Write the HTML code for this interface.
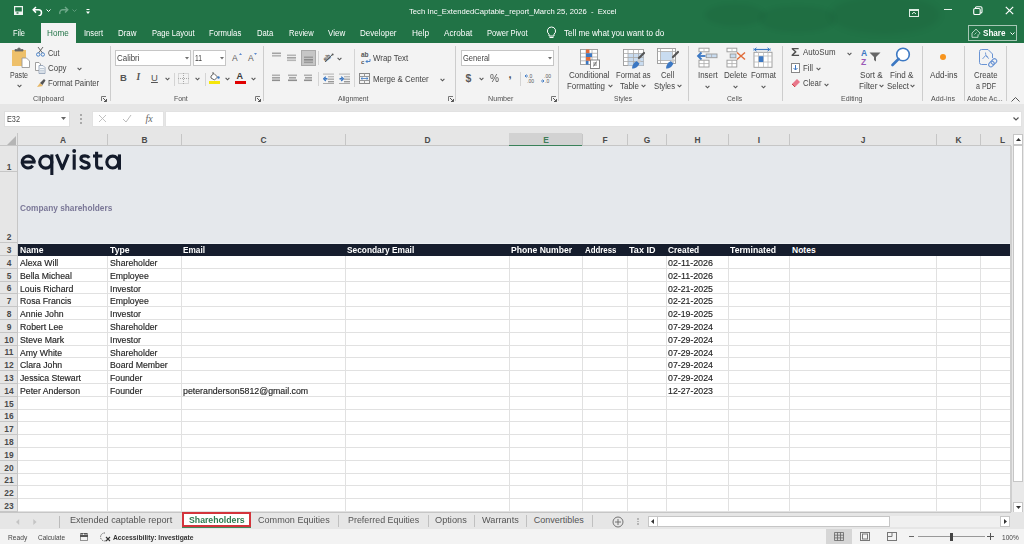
<!DOCTYPE html><html><head><meta charset="utf-8"><style>
html,body{margin:0;padding:0;width:1024px;height:544px;overflow:hidden;background:#fff;}
body{position:relative;font-family:"Liberation Sans",sans-serif;}
div{position:absolute;}
.t{white-space:pre;transform-origin:0 50%;}
</style></head><body>
<div style="left:0px;top:0px;width:1024px;height:43px;background:#217346;"></div>
<div style="left:700px;top:0;width:260px;height:43px;overflow:hidden;"><div style="left:5px;top:4px;width:60px;height:22px;border-radius:50%;background:rgba(0,0,0,0.045);filter:blur(2px);"></div><div style="left:60px;top:6px;width:75px;height:26px;border-radius:45%;background:rgba(0,0,0,0.045);filter:blur(2px);"></div><div style="left:130px;top:-4px;width:110px;height:38px;border-radius:50%;background:rgba(0,0,0,0.05);filter:blur(3px);"></div></div>
<svg style="position:absolute;left:14px;top:6px;" width="9" height="9" viewBox="0 0 9 9"><path d="M0.6 0.6 H8.4 V8.4 H0.6Z" fill="none" stroke="#f0f6f2" stroke-width="1.2"/><rect x="0.6" y="5.5" width="7.8" height="2.9" fill="#f0f6f2"/><rect x="2.5" y="6.3" width="2" height="1.4" fill="#2a6a45"/></svg>
<svg style="position:absolute;left:32px;top:6px;" width="11" height="10" viewBox="0 0 11 10"><path d="M4 1 L1.2 3.8 L4 6.6 M1.2 3.8 H6.5 A3 3 0 0 1 6.5 9.8" fill="none" stroke="#fff" stroke-width="1.5"/></svg>
<svg style="position:absolute;left:46px;top:9px;" width="5" height="4" viewBox="0 0 5 4"><path d="M0.5 0.5 L2.5 2.5 L4.5 0.5" fill="none" stroke="#fff" stroke-width="1"/></svg>
<svg style="position:absolute;left:58px;top:6px;" width="11" height="10" viewBox="0 0 11 10"><path d="M7 1 L9.8 3.8 L7 6.6 M9.8 3.8 H4.5 A3 3 0 0 0 2 8" fill="none" stroke="#6fa98a" stroke-width="1.4"/></svg>
<svg style="position:absolute;left:72px;top:9px;" width="5" height="4" viewBox="0 0 5 4"><path d="M0.5 0.5 L2.5 2.5 L4.5 0.5" fill="none" stroke="#5e9c7c" stroke-width="1"/></svg>
<svg style="position:absolute;left:86px;top:9px;" width="4" height="6" viewBox="0 0 4 6"><rect x="0.5" y="0" width="3" height="1" fill="#fff"/><path d="M0 2.5 L2 5 L4 2.5Z" fill="#fff"/></svg>
<div class="t" style="left:408.50px;top:8.00px;font-size:8px;line-height:8px;color:#fff;transform:scaleX(0.9581);">Tech Inc_ExtendedCaptable_report_March 25, 2026  -  Excel</div>
<svg style="position:absolute;left:909px;top:9px;" width="10" height="8" viewBox="0 0 10 8"><rect x="0.5" y="0.5" width="9" height="7" fill="none" stroke="#dfeee5" stroke-width="1"/><rect x="0.5" y="0.5" width="9" height="1.5" fill="#dfeee5"/><path d="M3 5 L5 3.2 L7 5" stroke="#dfeee5" fill="none"/></svg>
<div style="left:944px;top:9px;width:8px;height:1px;background:#e8f2ec;"></div>
<svg style="position:absolute;left:973px;top:6px;" width="10" height="9" viewBox="0 0 10 9"><rect x="0.7" y="2.5" width="6.5" height="6" rx="1.3" fill="none" stroke="#fff" stroke-width="1.1"/><path d="M2.5 2.5 V2 A1.3 1.3 0 0 1 3.8 0.7 H7.7 A1.3 1.3 0 0 1 9 2 V5.7 A1.3 1.3 0 0 1 7.7 7 H7.2" fill="none" stroke="#fff" stroke-width="1.1"/></svg>
<svg style="position:absolute;left:1005px;top:6px;" width="9" height="9" viewBox="0 0 9 9"><path d="M0.8 0.8 L8.2 8.2 M8.2 0.8 L0.8 8.2" stroke="#fff" stroke-width="1.2"/></svg>
<div style="left:41px;top:23px;width:35px;height:20px;background:#f3f3f3;"></div>
<div class="t" style="left:13.25px;top:29.00px;font-size:8.5px;line-height:8.5px;color:#fff;transform:scaleX(0.8761);">File</div>
<div class="t" style="left:47.00px;top:29.00px;font-size:8.5px;line-height:8.5px;color:#217346;transform:scaleX(0.9592);">Home</div>
<div class="t" style="left:83.75px;top:29.00px;font-size:8.5px;line-height:8.5px;color:#fff;transform:scaleX(0.8938);">Insert</div>
<div class="t" style="left:118.00px;top:29.00px;font-size:8.5px;line-height:8.5px;color:#fff;transform:scaleX(0.9327);">Draw</div>
<div class="t" style="left:151.50px;top:29.00px;font-size:8.5px;line-height:8.5px;color:#fff;transform:scaleX(0.8903);">Page Layout</div>
<div class="t" style="left:209.00px;top:29.00px;font-size:8.5px;line-height:8.5px;color:#fff;transform:scaleX(0.9104);">Formulas</div>
<div class="t" style="left:256.75px;top:29.00px;font-size:8.5px;line-height:8.5px;color:#fff;transform:scaleX(0.9050);">Data</div>
<div class="t" style="left:288.50px;top:29.00px;font-size:8.5px;line-height:8.5px;color:#fff;transform:scaleX(0.8880);">Review</div>
<div class="t" style="left:328.00px;top:29.00px;font-size:8.5px;line-height:8.5px;color:#fff;transform:scaleX(0.9441);">View</div>
<div class="t" style="left:360.25px;top:29.00px;font-size:8.5px;line-height:8.5px;color:#fff;transform:scaleX(0.9420);">Developer</div>
<div class="t" style="left:411.75px;top:29.00px;font-size:8.5px;line-height:8.5px;color:#fff;transform:scaleX(0.9724);">Help</div>
<div class="t" style="left:444.00px;top:29.00px;font-size:8.5px;line-height:8.5px;color:#fff;transform:scaleX(0.9643);">Acrobat</div>
<div class="t" style="left:487.25px;top:29.00px;font-size:8.5px;line-height:8.5px;color:#fff;transform:scaleX(0.8930);">Power Pivot</div>
<svg style="position:absolute;left:546px;top:26px;" width="11" height="13" viewBox="0 0 11 13"><path d="M5.5 1 A4 4 0 0 1 8 8.2 V10 H3 V8.2 A4 4 0 0 1 5.5 1Z" fill="none" stroke="#fff" stroke-width="1"/><path d="M3.5 11.5 H7.5" stroke="#fff"/></svg>
<div class="t" style="left:563.75px;top:29.00px;font-size:8.5px;line-height:8.5px;color:#fff;transform:scaleX(0.9558);">Tell me what you want to do</div>
<div style="left:968px;top:25px;width:49px;height:16px;border:1px solid rgba(255,255,255,0.6);box-sizing:border-box;"></div>
<svg style="position:absolute;left:971px;top:28px;" width="10" height="10" viewBox="0 0 10 10"><path d="M1 9.3 H7 V6.5 M1 9.3 V5 L5 1.2 L9.2 5.2 L7.5 6.8" fill="none" stroke="#cfe3d6" stroke-width="0.9" stroke-linejoin="round"/><path d="M3.5 6.5 L5.5 4.5" stroke="#cfe3d6" stroke-width="0.8"/></svg>
<div class="t" style="left:982.50px;top:28.00px;font-size:9.5px;line-height:9.5px;color:#fff;font-weight:bold;transform:scaleX(0.8521);">Share</div>
<svg style="position:absolute;left:1009.5px;top:32px;" width="5" height="4" viewBox="0 0 5 4"><path d="M0.5 0.5 L2.5 2.5 L4.5 0.5" fill="none" stroke="#fff" stroke-width="1"/></svg>
<div style="left:0px;top:43px;width:1024px;height:61px;background:#f3f3f3;"></div>
<div style="left:110px;top:46px;width:1px;height:55px;background:#cdcdcd;"></div>
<div style="left:263px;top:46px;width:1px;height:55px;background:#cdcdcd;"></div>
<div style="left:455px;top:46px;width:1px;height:55px;background:#cdcdcd;"></div>
<div style="left:558px;top:46px;width:1px;height:55px;background:#cdcdcd;"></div>
<div style="left:688px;top:46px;width:1px;height:55px;background:#cdcdcd;"></div>
<div style="left:782px;top:46px;width:1px;height:55px;background:#cdcdcd;"></div>
<div style="left:922px;top:46px;width:1px;height:55px;background:#cdcdcd;"></div>
<div style="left:964px;top:46px;width:1px;height:55px;background:#cdcdcd;"></div>
<div style="left:1006px;top:46px;width:1px;height:55px;background:#cdcdcd;"></div>
<div class="t" style="left:33.00px;top:95.00px;font-size:8px;line-height:8px;color:#505050;transform:scaleX(0.9053);">Clipboard</div>
<div class="t" style="left:173.75px;top:95.00px;font-size:8px;line-height:8px;color:#505050;transform:scaleX(0.8589);">Font</div>
<div class="t" style="left:338.00px;top:95.00px;font-size:8px;line-height:8px;color:#505050;transform:scaleX(0.8573);">Alignment</div>
<div class="t" style="left:488.20px;top:95.00px;font-size:8px;line-height:8px;color:#505050;transform:scaleX(0.8927);">Number</div>
<div class="t" style="left:614.00px;top:95.00px;font-size:8px;line-height:8px;color:#505050;transform:scaleX(0.8262);">Styles</div>
<div class="t" style="left:727.00px;top:95.00px;font-size:8px;line-height:8px;color:#505050;transform:scaleX(0.8436);">Cells</div>
<div class="t" style="left:841.00px;top:95.00px;font-size:8px;line-height:8px;color:#505050;transform:scaleX(0.8789);">Editing</div>
<div class="t" style="left:930.50px;top:95.00px;font-size:8px;line-height:8px;color:#505050;transform:scaleX(0.8848);">Add-ins</div>
<div class="t" style="left:966.75px;top:95.00px;font-size:8px;line-height:8px;color:#505050;transform:scaleX(0.8737);">Adobe Ac...</div>
<svg style="position:absolute;left:101px;top:96px;" width="6" height="6" viewBox="0 0 6 6"><path d="M0.5 5 V0.5 H5" fill="none" stroke="#777" stroke-width="1"/><path d="M2 2 L5.5 5.5 M5.5 3 V5.5 H3" fill="none" stroke="#555" stroke-width="1"/></svg>
<svg style="position:absolute;left:255px;top:96px;" width="6" height="6" viewBox="0 0 6 6"><path d="M0.5 5 V0.5 H5" fill="none" stroke="#777" stroke-width="1"/><path d="M2 2 L5.5 5.5 M5.5 3 V5.5 H3" fill="none" stroke="#555" stroke-width="1"/></svg>
<svg style="position:absolute;left:448px;top:96px;" width="6" height="6" viewBox="0 0 6 6"><path d="M0.5 5 V0.5 H5" fill="none" stroke="#777" stroke-width="1"/><path d="M2 2 L5.5 5.5 M5.5 3 V5.5 H3" fill="none" stroke="#555" stroke-width="1"/></svg>
<svg style="position:absolute;left:551px;top:96px;" width="6" height="6" viewBox="0 0 6 6"><path d="M0.5 5 V0.5 H5" fill="none" stroke="#777" stroke-width="1"/><path d="M2 2 L5.5 5.5 M5.5 3 V5.5 H3" fill="none" stroke="#555" stroke-width="1"/></svg>
<svg style="position:absolute;left:1011px;top:97px;" width="9" height="5" viewBox="0 0 9 5"><path d="M0.5 4.5 L4.5 0.5 L8.5 4.5" fill="none" stroke="#555" stroke-width="1"/></svg>
<svg style="position:absolute;left:11px;top:47px;" width="19" height="22" viewBox="0 0 19 22"><rect x="1" y="3" width="14" height="16" fill="#eec06a"/><path d="M4 4 H12 V2.5 H9.5 A1.5 1.5 0 0 0 6.5 2.5 H4Z" fill="#666" stroke="#666" stroke-width="0.8"/><path d="M11 11 H15.5 L18.5 14 V20.5 H11Z" fill="#fff" stroke="#999" stroke-width="0.9"/></svg>
<div class="t" style="left:10.00px;top:71.00px;font-size:8.5px;line-height:8.5px;color:#444444;transform:scaleX(0.8281);">Paste</div>
<svg style="position:absolute;left:16.5px;top:84px;" width="5" height="4" viewBox="0 0 5 4"><path d="M0.6 0.8 L2.5 2.8 L4.4 0.8" fill="none" stroke="#555" stroke-width="1.1"/></svg>
<svg style="position:absolute;left:36px;top:47px;" width="9" height="10" viewBox="0 0 9 10"><path d="M2 0 L6.5 6 M7 0 L2.5 6" stroke="#555" stroke-width="0.9"/><circle cx="2.2" cy="7.5" r="1.7" fill="none" stroke="#3c78c3" stroke-width="0.9"/><circle cx="6.8" cy="7.5" r="1.7" fill="none" stroke="#3c78c3" stroke-width="0.9"/></svg>
<div class="t" style="left:47.80px;top:49.00px;font-size:8.5px;line-height:8.5px;color:#444444;transform:scaleX(0.8694);">Cut</div>
<svg style="position:absolute;left:35px;top:62px;" width="11" height="12" viewBox="0 0 11 12"><path d="M0.5 0.5 H4 L5.5 2 V8.5 H0.5Z" fill="#fff" stroke="#888" stroke-width="0.8"/><path d="M4 3.5 H8 L10 5.5 V11.5 H4Z" fill="#f4f7fb" stroke="#8a9bb0" stroke-width="0.8"/><path d="M5 6.5 H9 M5 8.3 H9 M5 10 H9" stroke="#9ab" stroke-width="0.6"/></svg>
<div class="t" style="left:47.80px;top:64.00px;font-size:8.5px;line-height:8.5px;color:#444444;transform:scaleX(0.9323);">Copy</div>
<svg style="position:absolute;left:76.5px;top:67px;" width="5" height="4" viewBox="0 0 5 4"><path d="M0.6 0.8 L2.5 2.8 L4.4 0.8" fill="none" stroke="#555" stroke-width="1.1"/></svg>
<svg style="position:absolute;left:36px;top:78px;" width="10" height="10" viewBox="0 0 10 10"><path d="M1 9 L4 5 L7 8 Z" fill="#e8b865"/><path d="M4 5 L8 1 L9.5 2.5 L6.5 7" fill="#555"/></svg>
<div class="t" style="left:47.80px;top:79.00px;font-size:8.5px;line-height:8.5px;color:#444444;transform:scaleX(0.9108);">Format Painter</div>
<div style="left:115px;top:50px;width:76px;height:16px;background:#fff;border:1px solid #c6c6c6;box-sizing:border-box;"></div>
<div class="t" style="left:117.00px;top:54.00px;font-size:8.5px;line-height:8.5px;color:#444444;transform:scaleX(0.9340);">Calibri</div>
<svg style="position:absolute;left:185px;top:57px;" width="4" height="2.5" viewBox="0 0 4 2.5"><path d="M0 0 H4 L2 2.5Z" fill="#707070"/></svg>
<div style="left:193px;top:50px;width:33px;height:16px;background:#fff;border:1px solid #c6c6c6;box-sizing:border-box;"></div>
<div class="t" style="left:195.00px;top:54.00px;font-size:8.5px;line-height:8.5px;color:#444444;transform:scaleX(0.7933);">11</div>
<svg style="position:absolute;left:219.5px;top:57px;" width="4" height="2.5" viewBox="0 0 4 2.5"><path d="M0 0 H4 L2 2.5Z" fill="#707070"/></svg>
<div class="t" style="left:232.00px;top:54.00px;font-size:8.5px;line-height:8.5px;color:#5a5a5a;">A</div>
<svg style="position:absolute;left:238.5px;top:53px;" width="3" height="2" viewBox="0 0 3 2"><path d="M0 2 L1.5 0 L3 2Z" fill="#5b8ad0"/></svg>
<div class="t" style="left:248.00px;top:54.00px;font-size:8.5px;line-height:8.5px;color:#5a5a5a;">A</div>
<svg style="position:absolute;left:254px;top:53px;" width="3" height="2" viewBox="0 0 3 2"><path d="M0 0 L1.5 2 L3 0Z" fill="#5b8ad0"/></svg>
<div class="t" style="left:120.00px;top:73.00px;font-size:9.5px;line-height:9.5px;color:#555;font-weight:bold;">B</div>
<div class="t" style="left:136.50px;top:73.00px;font-size:9.5px;line-height:9.5px;color:#555;font-style:italic;font-family:'Liberation Serif',serif;font-weight:bold;">I</div>
<div class="t" style="left:151.00px;top:73.00px;font-size:9.5px;line-height:9.5px;color:#555;text-decoration:underline;">U</div>
<svg style="position:absolute;left:164.5px;top:77px;" width="5" height="4" viewBox="0 0 5 4"><path d="M0.6 0.8 L2.5 2.8 L4.4 0.8" fill="none" stroke="#555" stroke-width="1.1"/></svg>
<div style="left:174px;top:73px;width:1px;height:13px;background:#d4d4d4;"></div>
<svg style="position:absolute;left:178px;top:73px;" width="11" height="11" viewBox="0 0 11 11"><rect x="0.5" y="0.5" width="10" height="10" fill="none" stroke="#bbb" stroke-dasharray="1 1"/><path d="M5.5 0 V11 M0 5.5 H11" stroke="#aaa" stroke-dasharray="1 1"/></svg>
<svg style="position:absolute;left:194.5px;top:77px;" width="5" height="4" viewBox="0 0 5 4"><path d="M0.6 0.8 L2.5 2.8 L4.4 0.8" fill="none" stroke="#555" stroke-width="1.1"/></svg>
<div style="left:205px;top:73px;width:1px;height:13px;background:#d4d4d4;"></div>
<svg style="position:absolute;left:208px;top:71px;" width="13" height="13" viewBox="0 0 13 13"><path d="M5 1 V3 M3 5 L6 2.5 L9.5 6 L6.5 9 L3 7Z" fill="#fff" stroke="#555" stroke-width="0.9"/><circle cx="10.5" cy="6.5" r="1.2" fill="#3c78c3"/><rect x="1" y="10" width="11" height="3" fill="#f5e60a"/></svg>
<svg style="position:absolute;left:224.5px;top:77px;" width="5" height="4" viewBox="0 0 5 4"><path d="M0.6 0.8 L2.5 2.8 L4.4 0.8" fill="none" stroke="#555" stroke-width="1.1"/></svg>
<div class="t" style="left:236.50px;top:72.00px;font-size:9px;line-height:9px;color:#3a3a3a;font-weight:bold;">A</div>
<div style="left:235px;top:81px;width:11px;height:3px;background:#e00000;"></div>
<svg style="position:absolute;left:250.5px;top:77px;" width="5" height="4" viewBox="0 0 5 4"><path d="M0.6 0.8 L2.5 2.8 L4.4 0.8" fill="none" stroke="#555" stroke-width="1.1"/></svg>
<svg style="position:absolute;left:272px;top:52px;" width="12" height="12" viewBox="0 0 12 12"><rect x="0" y="0.5" width="9" height="1.6" fill="#a3a3a3"/><rect x="0" y="3" width="9" height="1.6" fill="#b5b5b5"/></svg>
<svg style="position:absolute;left:287px;top:54px;" width="12" height="12" viewBox="0 0 12 12"><rect x="0" y="0.5" width="9" height="1.6" fill="#b5b5b5"/><rect x="0" y="3" width="9" height="1.6" fill="#a3a3a3"/><rect x="0" y="5.5" width="9" height="1.6" fill="#b5b5b5"/></svg>
<div style="left:301px;top:50px;width:15px;height:16px;background:#c6c6c6;border:1px solid #a9a9a9;box-sizing:border-box;"></div>
<svg style="position:absolute;left:304px;top:56px;" width="12" height="12" viewBox="0 0 12 12"><rect x="0" y="0.5" width="9" height="1.6" fill="#9a9a9a"/><rect x="0" y="3" width="9" height="1.6" fill="#8a8a8a"/><rect x="0" y="5.5" width="9" height="1.6" fill="#9a9a9a"/></svg>
<div style="left:318px;top:51px;width:1px;height:14px;background:#d4d4d4;"></div>
<svg style="position:absolute;left:322px;top:51px;" width="13" height="12" viewBox="0 0 13 12"><g transform="rotate(-40 6 6)"><text x="1" y="8" font-size="6.5" font-family="Liberation Sans" font-weight="bold" fill="none" stroke="#666" stroke-width="0.5">ab</text></g><path d="M3 11 L11 3" stroke="#555" stroke-width="0.9"/><circle cx="10.6" cy="3.4" r="1" fill="#555"/></svg>
<svg style="position:absolute;left:336.5px;top:57px;" width="5" height="4" viewBox="0 0 5 4"><path d="M0.6 0.8 L2.5 2.8 L4.4 0.8" fill="none" stroke="#555" stroke-width="1.1"/></svg>
<svg style="position:absolute;left:272px;top:74px;" width="12" height="12" viewBox="0 0 12 12"><rect x="0" y="0.5" width="8" height="1.6" fill="#b0b0b0"/><rect x="0" y="3" width="8" height="1.6" fill="#a3a3a3"/><rect x="0" y="5.5" width="8" height="1.6" fill="#8f8f8f"/></svg>
<svg style="position:absolute;left:288px;top:74px;" width="12" height="12" viewBox="0 0 12 12"><rect x="0" y="0.5" width="9" height="1.6" fill="#b0b0b0"/><rect x="1" y="3" width="7" height="1.6" fill="#a3a3a3"/><rect x="0" y="5.5" width="9" height="1.6" fill="#8f8f8f"/></svg>
<svg style="position:absolute;left:304px;top:74px;" width="12" height="12" viewBox="0 0 12 12"><rect x="0" y="0.5" width="8" height="1.6" fill="#b0b0b0"/><rect x="1" y="3" width="7" height="1.6" fill="#a3a3a3"/><rect x="0" y="5.5" width="8" height="1.6" fill="#8f8f8f"/></svg>
<div style="left:318px;top:72px;width:1px;height:14px;background:#d4d4d4;"></div>
<svg style="position:absolute;left:323px;top:73px;" width="11" height="11" viewBox="0 0 11 11"><rect x="0" y="0.5" width="11" height="1.2" fill="#bbb"/><rect x="5" y="3" width="6" height="1.4" fill="#bbb"/><rect x="5" y="5.5" width="6" height="1.4" fill="#aaa"/><rect x="5" y="8" width="6" height="1.4" fill="#999"/><rect x="0" y="10" width="11" height="1" fill="#aaa"/><path d="M4.5 5.8 H1.5" stroke="#3c78c3" stroke-width="1.6"/><path d="M2.8 3.6 L0.6 5.8 L2.8 8" stroke="#3c78c3" stroke-width="1.3" fill="none"/></svg>
<svg style="position:absolute;left:339px;top:73px;" width="11" height="11" viewBox="0 0 11 11"><rect x="0" y="0.5" width="11" height="1.2" fill="#bbb"/><rect x="5" y="3" width="6" height="1.4" fill="#bbb"/><rect x="5" y="5.5" width="6" height="1.4" fill="#aaa"/><rect x="5" y="8" width="6" height="1.4" fill="#999"/><rect x="0" y="10" width="11" height="1" fill="#aaa"/><path d="M0.5 5.8 H3.5" stroke="#3c78c3" stroke-width="1.6"/><path d="M2.2 3.6 L4.4 5.8 L2.2 8" stroke="#3c78c3" stroke-width="1.3" fill="none"/></svg>
<div style="left:354px;top:49px;width:1px;height:38px;background:#d4d4d4;"></div>
<div class="t" style="left:361.00px;top:52.00px;font-size:6.5px;line-height:6.5px;color:#555;font-weight:bold;">ab</div>
<svg style="position:absolute;left:361px;top:58px;" width="10" height="6" viewBox="0 0 10 6"><text x="0" y="5.5" font-size="6" font-family="Liberation Sans" font-weight="bold" fill="#555">c</text><path d="M9 1 V3.5 H5 M6.5 2 L5 3.5 L6.5 5" stroke="#3c78c3" fill="none" stroke-width="0.9"/></svg>
<div class="t" style="left:372.75px;top:54.00px;font-size:8.5px;line-height:8.5px;color:#444444;transform:scaleX(0.9288);">Wrap Text</div>
<svg style="position:absolute;left:359px;top:73px;" width="11" height="11" viewBox="0 0 11 11"><rect x="0.5" y="0.5" width="10" height="10" fill="none" stroke="#888"/><path d="M0.5 3.5 H10.5 M0.5 7.5 H10.5 M5.5 0.5 V3.5 M5.5 7.5 V10.5" stroke="#999"/><path d="M2 5.5 H9 M3.5 4.3 L2 5.5 L3.5 6.7 M7.5 4.3 L9 5.5 L7.5 6.7" stroke="#3c78c3" fill="none" stroke-width="0.8"/></svg>
<div class="t" style="left:372.75px;top:75.00px;font-size:8.5px;line-height:8.5px;color:#444444;transform:scaleX(0.9292);">Merge &amp; Center</div>
<svg style="position:absolute;left:439.5px;top:78px;" width="5" height="4" viewBox="0 0 5 4"><path d="M0.6 0.8 L2.5 2.8 L4.4 0.8" fill="none" stroke="#555" stroke-width="1.1"/></svg>
<div style="left:461px;top:50px;width:93px;height:16px;background:#fff;border:1px solid #c6c6c6;box-sizing:border-box;"></div>
<div class="t" style="left:463.00px;top:54.00px;font-size:8.5px;line-height:8.5px;color:#444444;transform:scaleX(0.8846);">General</div>
<svg style="position:absolute;left:547.5px;top:57px;" width="4" height="2.5" viewBox="0 0 4 2.5"><path d="M0 0 H4 L2 2.5Z" fill="#707070"/></svg>
<div class="t" style="left:465.50px;top:73.00px;font-size:10.5px;line-height:10.5px;color:#5a5a5a;font-weight:bold;">$</div>
<svg style="position:absolute;left:478.5px;top:77px;" width="5" height="4" viewBox="0 0 5 4"><path d="M0.6 0.8 L2.5 2.8 L4.4 0.8" fill="none" stroke="#555" stroke-width="1.1"/></svg>
<div class="t" style="left:489.50px;top:74.00px;font-size:10px;line-height:10px;color:#555;transform:scaleX(1.0122);">%</div>
<div class="t" style="left:508.50px;top:69.00px;font-size:11px;line-height:11px;color:#505050;font-weight:bold;">,</div>
<div style="left:520px;top:72px;width:1px;height:14px;background:#d4d4d4;"></div>
<svg style="position:absolute;left:525px;top:73px;" width="10" height="11" viewBox="0 0 10 11"><text x="3" y="4.5" font-size="5" font-family="Liberation Sans" fill="#555">.0</text><text x="2" y="10" font-size="5" font-family="Liberation Sans" fill="#555">.00</text><path d="M0 3 H3 M1.5 1.5 L0 3 L1.5 4.5" stroke="#3c78c3" fill="none" stroke-width="0.9"/></svg>
<svg style="position:absolute;left:541px;top:73px;" width="11" height="11" viewBox="0 0 11 11"><text x="3" y="4.5" font-size="5" font-family="Liberation Sans" fill="#555">.00</text><text x="4" y="10" font-size="5" font-family="Liberation Sans" fill="#555">.0</text><path d="M0 8 H3 M1.5 6.5 L3 8 L1.5 9.5" stroke="#3c78c3" fill="none" stroke-width="0.9"/></svg>
<svg style="position:absolute;left:580px;top:49px;" width="21" height="20" viewBox="0 0 21 20"><rect x="0.5" y="0.5" width="17" height="15" fill="#fff" stroke="#999" stroke-width="0.9"/><path d="M0.5 4.3 H17.5 M0.5 8 H17.5 M0.5 11.8 H17.5 M6 0.5 V15.5 M12 0.5 V15.5" stroke="#aaa" stroke-width="0.8"/><rect x="6" y="0.5" width="3.5" height="3.8" fill="#e06c3a"/><rect x="6" y="4.3" width="6" height="3.7" fill="#3c78c3"/><rect x="6" y="8" width="4.5" height="3.8" fill="#e06c3a"/><rect x="6" y="11.8" width="2.5" height="3.7" fill="#3c78c3"/><rect x="10.5" y="11" width="9" height="8.5" fill="#fff" stroke="#777" stroke-width="0.9"/><path d="M13 16 H17 M13 14 H17 M16.5 12.5 L13.5 17.5" stroke="#555" stroke-width="0.7"/></svg>
<div class="t" style="left:569.00px;top:71.00px;font-size:8.5px;line-height:8.5px;color:#444444;transform:scaleX(0.9523);">Conditional</div>
<div class="t" style="left:566.50px;top:82.00px;font-size:8.5px;line-height:8.5px;color:#444444;transform:scaleX(0.9354);">Formatting</div>
<svg style="position:absolute;left:607.5px;top:84px;" width="5" height="4" viewBox="0 0 5 4"><path d="M0.6 0.8 L2.5 2.8 L4.4 0.8" fill="none" stroke="#555" stroke-width="1.1"/></svg>
<svg style="position:absolute;left:623px;top:49px;" width="22" height="20" viewBox="0 0 22 20"><rect x="0.5" y="0.5" width="20" height="16" fill="#fff" stroke="#999" stroke-width="0.9"/><rect x="5" y="4.5" width="15.5" height="12" fill="#c9dcf0"/><path d="M0.5 4.5 H20.5 M0.5 8.5 H20.5 M0.5 12.5 H20.5 M5 0.5 V16.5 M10.5 0.5 V16.5 M15.5 0.5 V16.5" stroke="#aaa" stroke-width="0.8"/><path d="M16 9 L21 4" stroke="#555" stroke-width="2.2" stroke-linecap="round"/><path d="M9 19.5 C9 16 11 13.5 14 12 L16.5 14.5 C15 17.5 13 19.5 9 19.5Z" fill="#3c78c3"/><path d="M14 12 L16 9.5 L18 11.5 L16.5 14.5Z" fill="#ccc"/></svg>
<div class="t" style="left:615.75px;top:71.00px;font-size:8.5px;line-height:8.5px;color:#444444;transform:scaleX(0.9017);">Format as</div>
<div class="t" style="left:620.00px;top:82.00px;font-size:8.5px;line-height:8.5px;color:#444444;transform:scaleX(0.9350);">Table</div>
<svg style="position:absolute;left:640.5px;top:84px;" width="5" height="4" viewBox="0 0 5 4"><path d="M0.6 0.8 L2.5 2.8 L4.4 0.8" fill="none" stroke="#555" stroke-width="1.1"/></svg>
<svg style="position:absolute;left:657px;top:48px;" width="22" height="21" viewBox="0 0 22 21"><rect x="0.5" y="0.5" width="18" height="15" fill="#fff" stroke="#999" stroke-width="0.9"/><path d="M0.5 3.5 H18.5 M0.5 12.5 H18.5 M3.5 0.5 V15.5 M15.5 0.5 V15.5" stroke="#aaa" stroke-width="0.8"/><rect x="4" y="4" width="11" height="8" fill="#c9dcf0"/><path d="M16 9 L21 4" stroke="#555" stroke-width="2.2" stroke-linecap="round"/><path d="M9 20.5 C9 17 11 14.5 14 13 L16.5 15.5 C15 18.5 13 20.5 9 20.5Z" fill="#3c78c3"/><path d="M14 13 L16 10 L18 12 L16.5 15.5Z" fill="#ccc"/></svg>
<div class="t" style="left:660.75px;top:71.00px;font-size:8.5px;line-height:8.5px;color:#444444;transform:scaleX(0.9049);">Cell</div>
<div class="t" style="left:653.75px;top:82.00px;font-size:8.5px;line-height:8.5px;color:#444444;transform:scaleX(0.9072);">Styles</div>
<svg style="position:absolute;left:676.5px;top:84px;" width="5" height="4" viewBox="0 0 5 4"><path d="M0.6 0.8 L2.5 2.8 L4.4 0.8" fill="none" stroke="#555" stroke-width="1.1"/></svg>
<svg style="position:absolute;left:696px;top:47px;" width="22" height="22" viewBox="0 0 22 22"><rect x="3" y="1.2" width="10" height="3.6" fill="#fff" stroke="#999" stroke-width="0.9"/><path d="M8 1.2 V4.8" stroke="#bbb" stroke-width="0.8"/><rect x="10.2" y="7" width="10.8" height="3.7" fill="#c9dcf0" stroke="#999" stroke-width="0.9"/><path d="M15.6 7 V10.7" stroke="#aaa" stroke-width="0.8"/><path d="M9.5 9 H2.5" stroke="#3c78c3" stroke-width="1.8"/><path d="M5.5 5.5 L2 9 L5.5 12.5" stroke="#3c78c3" stroke-width="1.8" fill="none"/><rect x="3" y="13.2" width="10" height="6.8" fill="#fff" stroke="#999" stroke-width="0.9"/><path d="M8 13.2 V20 M3 16.6 H13" stroke="#aaa" stroke-width="0.8"/></svg>
<div class="t" style="left:697.75px;top:71.00px;font-size:8.5px;line-height:8.5px;color:#444444;transform:scaleX(0.9290);">Insert</div>
<svg style="position:absolute;left:704.5px;top:85px;" width="5" height="4" viewBox="0 0 5 4"><path d="M0.6 0.8 L2.5 2.8 L4.4 0.8" fill="none" stroke="#555" stroke-width="1.1"/></svg>
<svg style="position:absolute;left:726px;top:47px;" width="21" height="22" viewBox="0 0 21 22"><rect x="1" y="1.2" width="9.8" height="3.6" fill="#fff" stroke="#999" stroke-width="0.9"/><path d="M6 1.2 V4.8" stroke="#bbb" stroke-width="0.8"/><rect x="4.2" y="7" width="5.7" height="3.8" fill="#c9dcf0" stroke="#999" stroke-width="0.9"/><rect x="1" y="13.2" width="9.8" height="6.8" fill="#fff" stroke="#999" stroke-width="0.9"/><path d="M6 13.2 V20 M1 16.6 H10.8" stroke="#aaa" stroke-width="0.8"/><path d="M11 5.5 L19 12.5 M19 5.5 L11 12.5" stroke="#e06c3a" stroke-width="1.5"/></svg>
<div class="t" style="left:723.75px;top:71.00px;font-size:8.5px;line-height:8.5px;color:#444444;transform:scaleX(0.9462);">Delete</div>
<svg style="position:absolute;left:732.5px;top:85px;" width="5" height="4" viewBox="0 0 5 4"><path d="M0.6 0.8 L2.5 2.8 L4.4 0.8" fill="none" stroke="#555" stroke-width="1.1"/></svg>
<svg style="position:absolute;left:753px;top:47px;" width="21" height="22" viewBox="0 0 21 22"><path d="M1.5 2.5 H16.5" stroke="#3c78c3" stroke-width="1.2"/><path d="M3.5 0.8 L1.2 2.5 L3.5 4.2 M14.5 0.8 L16.8 2.5 L14.5 4.2" stroke="#3c78c3" stroke-width="1" fill="none"/><path d="M0.5 1 V4 M17.5 1 V4" stroke="#aac8e8" stroke-width="1"/><rect x="1" y="5.3" width="18" height="15" fill="#fff" stroke="#999" stroke-width="0.9"/><path d="M1 9 H19 M1 15 H19 M5.5 5.3 V20.3 M10.5 5.3 V20.3 M15 5.3 V20.3" stroke="#bbb" stroke-width="0.8"/><rect x="5.8" y="9.2" width="4.5" height="5.8" fill="#3c78c3"/></svg>
<div class="t" style="left:751.00px;top:71.00px;font-size:8.5px;line-height:8.5px;color:#444444;transform:scaleX(0.9287);">Format</div>
<svg style="position:absolute;left:760.5px;top:85px;" width="5" height="4" viewBox="0 0 5 4"><path d="M0.6 0.8 L2.5 2.8 L4.4 0.8" fill="none" stroke="#555" stroke-width="1.1"/></svg>
<div class="t" style="left:791.00px;top:47.00px;font-size:11px;line-height:11px;color:#505050;font-weight:bold;transform:scaleX(1.2877);">Σ</div>
<div class="t" style="left:803.00px;top:48.00px;font-size:8.5px;line-height:8.5px;color:#444444;transform:scaleX(0.9295);">AutoSum</div>
<svg style="position:absolute;left:846.5px;top:52px;" width="5" height="4" viewBox="0 0 5 4"><path d="M0.6 0.8 L2.5 2.8 L4.4 0.8" fill="none" stroke="#555" stroke-width="1.1"/></svg>
<svg style="position:absolute;left:791px;top:63px;" width="9" height="10" viewBox="0 0 9 10"><rect x="0.5" y="0.5" width="8" height="9" fill="#fff" stroke="#888"/><path d="M4.5 2 V7 M2.5 5 L4.5 7 L6.5 5" stroke="#3c78c3" fill="none" stroke-width="1"/></svg>
<div class="t" style="left:803.00px;top:64.00px;font-size:8.5px;line-height:8.5px;color:#444444;transform:scaleX(0.9210);">Fill</div>
<svg style="position:absolute;left:815.5px;top:67px;" width="5" height="4" viewBox="0 0 5 4"><path d="M0.6 0.8 L2.5 2.8 L4.4 0.8" fill="none" stroke="#555" stroke-width="1.1"/></svg>
<svg style="position:absolute;left:791px;top:78px;" width="10" height="9" viewBox="0 0 10 9"><path d="M1 6 L6 1 L9 4 L4 9 Z" fill="#e8768a"/><path d="M1 6 L4 9" stroke="#c44" /></svg>
<div class="t" style="left:803.00px;top:79.00px;font-size:8.5px;line-height:8.5px;color:#444444;transform:scaleX(0.9107);">Clear</div>
<svg style="position:absolute;left:823.5px;top:83px;" width="5" height="4" viewBox="0 0 5 4"><path d="M0.6 0.8 L2.5 2.8 L4.4 0.8" fill="none" stroke="#555" stroke-width="1.1"/></svg>
<div class="t" style="left:861.00px;top:49.00px;font-size:8.5px;line-height:8.5px;color:#3c78c3;font-weight:bold;">A</div>
<div class="t" style="left:861.00px;top:58.00px;font-size:8.5px;line-height:8.5px;color:#9b59b6;font-weight:bold;">Z</div>
<svg style="position:absolute;left:869px;top:52px;" width="12" height="10" viewBox="0 0 12 10"><path d="M0.5 0.5 H11.5 L7 5 V9.5 L5 8 V5Z" fill="#666"/></svg>
<div class="t" style="left:859.75px;top:71.00px;font-size:8.5px;line-height:8.5px;color:#444444;transform:scaleX(0.9631);">Sort &amp;</div>
<div class="t" style="left:858.50px;top:82.00px;font-size:8.5px;line-height:8.5px;color:#444444;transform:scaleX(0.9794);">Filter</div>
<svg style="position:absolute;left:878.5px;top:84px;" width="5" height="4" viewBox="0 0 5 4"><path d="M0.6 0.8 L2.5 2.8 L4.4 0.8" fill="none" stroke="#555" stroke-width="1.1"/></svg>
<svg style="position:absolute;left:891px;top:47px;" width="20" height="20" viewBox="0 0 20 20"><circle cx="12" cy="7.5" r="6.3" fill="#fff" stroke="#3c78c3" stroke-width="1.6"/><path d="M7.5 12 L1.5 18" stroke="#3c78c3" stroke-width="2.6" stroke-linecap="round"/></svg>
<div class="t" style="left:889.75px;top:71.00px;font-size:8.5px;line-height:8.5px;color:#444444;transform:scaleX(0.9464);">Find &amp;</div>
<div class="t" style="left:886.75px;top:82.00px;font-size:8.5px;line-height:8.5px;color:#444444;transform:scaleX(0.9312);">Select</div>
<svg style="position:absolute;left:909.5px;top:84px;" width="5" height="4" viewBox="0 0 5 4"><path d="M0.6 0.8 L2.5 2.8 L4.4 0.8" fill="none" stroke="#555" stroke-width="1.1"/></svg>
<div style="left:940px;top:54px;width:6px;height:6px;border-radius:50%;background:#f7941d;"></div>
<div class="t" style="left:929.75px;top:71.00px;font-size:8.5px;line-height:8.5px;color:#444444;transform:scaleX(0.9541);">Add-ins</div>
<svg style="position:absolute;left:978px;top:48px;" width="20" height="21" viewBox="0 0 20 21"><path d="M3.5 1.5 H10 L14.5 6 V10 M9 16.5 H3.5 A2 2 0 0 1 1.5 14.5 V3.5 A2 2 0 0 1 3.5 1.5" fill="none" stroke="#6a94d4" stroke-width="1"/><path d="M7.5 4.5 C7.5 7 8.5 9.5 11 10.5 M7.5 7.5 L4.5 11 M7.7 7.8 L10 9" fill="none" stroke="#6a94d4" stroke-width="0.9"/><g transform="rotate(-45 14.5 15)"><rect x="10" y="12.8" width="6" height="4.4" rx="2.2" fill="none" stroke="#6a94d4" stroke-width="1.1"/><rect x="13.5" y="12.8" width="6" height="4.4" rx="2.2" fill="none" stroke="#6a94d4" stroke-width="1.1"/></g></svg>
<div class="t" style="left:973.50px;top:71.00px;font-size:8.5px;line-height:8.5px;color:#444444;transform:scaleX(0.9211);">Create</div>
<div class="t" style="left:975.50px;top:82.00px;font-size:8.5px;line-height:8.5px;color:#444444;transform:scaleX(0.8302);">a PDF</div>
<div style="left:0px;top:104px;width:1024px;height:29px;background:#e6e6e6;"></div>
<div style="left:4px;top:111px;width:66px;height:16px;background:#fff;border:1px solid #dedede;box-sizing:border-box;"></div>
<div class="t" style="left:7.00px;top:115.00px;font-size:8.5px;line-height:8.5px;color:#444;transform:scaleX(0.8595);">E32</div>
<svg style="position:absolute;left:61px;top:117px;" width="5" height="3" viewBox="0 0 5 3"><path d="M0 0 H5 L2.5 3Z" fill="#666"/></svg>
<div style="left:80px;top:114px;width:2px;height:2px;background:#aaa;"></div>
<div style="left:80px;top:118px;width:2px;height:2px;background:#aaa;"></div>
<div style="left:80px;top:122px;width:2px;height:2px;background:#aaa;"></div>
<div style="left:92px;top:111px;width:72px;height:16px;background:#fff;border:1px solid #e2e2e2;box-sizing:border-box;"></div>
<svg style="position:absolute;left:98px;top:114px;" width="9" height="9" viewBox="0 0 9 9"><path d="M1 1 L8 8 M8 1 L1 8" stroke="#bbb" stroke-width="0.9"/></svg>
<svg style="position:absolute;left:122px;top:114px;" width="10" height="9" viewBox="0 0 10 9"><path d="M1 5 L4 8 L9 1" stroke="#bbb" stroke-width="1" fill="none"/></svg>
<div class="t" style="left:145.50px;top:114.00px;font-size:10px;line-height:10px;color:#666;font-family:'Liberation Serif',serif;font-style:italic;">fx</div>
<div style="left:165px;top:111px;width:857px;height:16px;background:#fff;border:1px solid #e2e2e2;box-sizing:border-box;"></div>
<svg style="position:absolute;left:1013px;top:117px;" width="6" height="4" viewBox="0 0 6 4"><path d="M0.5 0.5 L3 3 L5.5 0.5" fill="none" stroke="#555" stroke-width="1.2"/></svg>
<div style="left:0px;top:133px;width:1011px;height:13px;background:#e6e6e6;"></div>
<div style="left:0px;top:145px;width:1011px;height:1px;background:#c6c6c6;"></div>
<svg style="position:absolute;left:7px;top:136px;" width="10" height="9" viewBox="0 0 10 9"><path d="M9 0 V9 H0Z" fill="#b5b5b5"/></svg>
<div style="left:17px;top:133px;width:1px;height:379px;background:#c6c6c6;"></div>
<div style="left:107px;top:134px;width:1px;height:11px;background:#c6c6c6;"></div>
<div class="t" style="left:59.97px;top:136.00px;font-size:8.4px;line-height:8.4px;color:#4a4a4a;font-weight:bold;">A</div>
<div style="left:181px;top:134px;width:1px;height:11px;background:#c6c6c6;"></div>
<div class="t" style="left:141.47px;top:136.00px;font-size:8.4px;line-height:8.4px;color:#4a4a4a;font-weight:bold;">B</div>
<div style="left:345px;top:134px;width:1px;height:11px;background:#c6c6c6;"></div>
<div class="t" style="left:260.47px;top:136.00px;font-size:8.4px;line-height:8.4px;color:#4a4a4a;font-weight:bold;">C</div>
<div style="left:509px;top:134px;width:1px;height:11px;background:#c6c6c6;"></div>
<div class="t" style="left:424.47px;top:136.00px;font-size:8.4px;line-height:8.4px;color:#4a4a4a;font-weight:bold;">D</div>
<div style="left:509px;top:133px;width:73px;height:13px;background:#d2d2d2;"></div>
<div style="left:509px;top:145px;width:73px;height:1px;background:#3a8159;"></div>
<div style="left:582px;top:134px;width:1px;height:11px;background:#c6c6c6;"></div>
<div class="t" style="left:543.20px;top:136.00px;font-size:8.4px;line-height:8.4px;color:#3f7d58;font-weight:bold;">E</div>
<div style="left:627px;top:134px;width:1px;height:11px;background:#c6c6c6;"></div>
<div class="t" style="left:602.43px;top:136.00px;font-size:8.4px;line-height:8.4px;color:#4a4a4a;font-weight:bold;">F</div>
<div style="left:666px;top:134px;width:1px;height:11px;background:#c6c6c6;"></div>
<div class="t" style="left:643.73px;top:136.00px;font-size:8.4px;line-height:8.4px;color:#4a4a4a;font-weight:bold;">G</div>
<div style="left:728px;top:134px;width:1px;height:11px;background:#c6c6c6;"></div>
<div class="t" style="left:694.47px;top:136.00px;font-size:8.4px;line-height:8.4px;color:#4a4a4a;font-weight:bold;">H</div>
<div style="left:789px;top:134px;width:1px;height:11px;background:#c6c6c6;"></div>
<div class="t" style="left:757.83px;top:136.00px;font-size:8.4px;line-height:8.4px;color:#4a4a4a;font-weight:bold;">I</div>
<div style="left:936px;top:134px;width:1px;height:11px;background:#c6c6c6;"></div>
<div class="t" style="left:860.66px;top:136.00px;font-size:8.4px;line-height:8.4px;color:#4a4a4a;font-weight:bold;">J</div>
<div style="left:980px;top:134px;width:1px;height:11px;background:#c6c6c6;"></div>
<div class="t" style="left:955.47px;top:136.00px;font-size:8.4px;line-height:8.4px;color:#4a4a4a;font-weight:bold;">K</div>
<div style="left:1011px;top:134px;width:1px;height:11px;background:#c6c6c6;"></div>
<div class="t" style="left:999.93px;top:136.00px;font-size:8.4px;line-height:8.4px;color:#4a4a4a;font-weight:bold;">L</div>
<div style="left:0px;top:146px;width:17px;height:366px;background:#e6e6e6;"></div>
<div style="left:0px;top:171px;width:17px;height:1px;background:#c6c6c6;"></div>
<div class="t" style="left:6.66px;top:163.00px;font-size:8.4px;line-height:8.4px;color:#4a4a4a;font-weight:bold;">1</div>
<div style="left:0px;top:242px;width:17px;height:1px;background:#c6c6c6;"></div>
<div class="t" style="left:6.66px;top:233.00px;font-size:8.4px;line-height:8.4px;color:#4a4a4a;font-weight:bold;">2</div>
<div style="left:0px;top:255px;width:17px;height:1px;background:#c6c6c6;"></div>
<div class="t" style="left:6.66px;top:246.00px;font-size:8.4px;line-height:8.4px;color:#4a4a4a;font-weight:bold;">3</div>
<div style="left:0px;top:268px;width:17px;height:1px;background:#c6c6c6;"></div>
<div class="t" style="left:6.66px;top:259.00px;font-size:8.4px;line-height:8.4px;color:#4a4a4a;font-weight:bold;">4</div>
<div style="left:0px;top:281px;width:17px;height:1px;background:#c6c6c6;"></div>
<div class="t" style="left:6.66px;top:272.00px;font-size:8.4px;line-height:8.4px;color:#4a4a4a;font-weight:bold;">5</div>
<div style="left:0px;top:293px;width:17px;height:1px;background:#c6c6c6;"></div>
<div class="t" style="left:6.66px;top:284.00px;font-size:8.4px;line-height:8.4px;color:#4a4a4a;font-weight:bold;">6</div>
<div style="left:0px;top:306px;width:17px;height:1px;background:#c6c6c6;"></div>
<div class="t" style="left:6.66px;top:297.00px;font-size:8.4px;line-height:8.4px;color:#4a4a4a;font-weight:bold;">7</div>
<div style="left:0px;top:319px;width:17px;height:1px;background:#c6c6c6;"></div>
<div class="t" style="left:6.66px;top:310.00px;font-size:8.4px;line-height:8.4px;color:#4a4a4a;font-weight:bold;">8</div>
<div style="left:0px;top:332px;width:17px;height:1px;background:#c6c6c6;"></div>
<div class="t" style="left:6.66px;top:323.00px;font-size:8.4px;line-height:8.4px;color:#4a4a4a;font-weight:bold;">9</div>
<div style="left:0px;top:345px;width:17px;height:1px;background:#c6c6c6;"></div>
<div class="t" style="left:4.33px;top:336.00px;font-size:8.4px;line-height:8.4px;color:#4a4a4a;font-weight:bold;">10</div>
<div style="left:0px;top:357px;width:17px;height:1px;background:#c6c6c6;"></div>
<div class="t" style="left:4.56px;top:348.00px;font-size:8.4px;line-height:8.4px;color:#4a4a4a;font-weight:bold;">11</div>
<div style="left:0px;top:370px;width:17px;height:1px;background:#c6c6c6;"></div>
<div class="t" style="left:4.33px;top:361.00px;font-size:8.4px;line-height:8.4px;color:#4a4a4a;font-weight:bold;">12</div>
<div style="left:0px;top:383px;width:17px;height:1px;background:#c6c6c6;"></div>
<div class="t" style="left:4.33px;top:374.00px;font-size:8.4px;line-height:8.4px;color:#4a4a4a;font-weight:bold;">13</div>
<div style="left:0px;top:396px;width:17px;height:1px;background:#c6c6c6;"></div>
<div class="t" style="left:4.33px;top:387.00px;font-size:8.4px;line-height:8.4px;color:#4a4a4a;font-weight:bold;">14</div>
<div style="left:0px;top:409px;width:17px;height:1px;background:#c6c6c6;"></div>
<div class="t" style="left:4.33px;top:400.00px;font-size:8.4px;line-height:8.4px;color:#4a4a4a;font-weight:bold;">15</div>
<div style="left:0px;top:421px;width:17px;height:1px;background:#c6c6c6;"></div>
<div class="t" style="left:4.33px;top:412.00px;font-size:8.4px;line-height:8.4px;color:#4a4a4a;font-weight:bold;">16</div>
<div style="left:0px;top:434px;width:17px;height:1px;background:#c6c6c6;"></div>
<div class="t" style="left:4.33px;top:425.00px;font-size:8.4px;line-height:8.4px;color:#4a4a4a;font-weight:bold;">17</div>
<div style="left:0px;top:447px;width:17px;height:1px;background:#c6c6c6;"></div>
<div class="t" style="left:4.33px;top:438.00px;font-size:8.4px;line-height:8.4px;color:#4a4a4a;font-weight:bold;">18</div>
<div style="left:0px;top:460px;width:17px;height:1px;background:#c6c6c6;"></div>
<div class="t" style="left:4.33px;top:451.00px;font-size:8.4px;line-height:8.4px;color:#4a4a4a;font-weight:bold;">19</div>
<div style="left:0px;top:473px;width:17px;height:1px;background:#c6c6c6;"></div>
<div class="t" style="left:4.33px;top:464.00px;font-size:8.4px;line-height:8.4px;color:#4a4a4a;font-weight:bold;">20</div>
<div style="left:0px;top:485px;width:17px;height:1px;background:#c6c6c6;"></div>
<div class="t" style="left:4.33px;top:476.00px;font-size:8.4px;line-height:8.4px;color:#4a4a4a;font-weight:bold;">21</div>
<div style="left:0px;top:498px;width:17px;height:1px;background:#c6c6c6;"></div>
<div class="t" style="left:4.33px;top:489.00px;font-size:8.4px;line-height:8.4px;color:#4a4a4a;font-weight:bold;">22</div>
<div style="left:0px;top:511px;width:17px;height:1px;background:#c6c6c6;"></div>
<div class="t" style="left:4.33px;top:502.00px;font-size:8.4px;line-height:8.4px;color:#4a4a4a;font-weight:bold;">23</div>
<div style="left:18px;top:146px;width:993px;height:366px;background:#fff;"></div>
<div style="left:18px;top:146px;width:993px;height:97px;background:#e5e8ec;"></div>
<div style="left:18px;top:243px;width:992px;height:1px;background:#eceff2;"></div>
<div style="left:18px;top:244px;width:992px;height:12px;background:#161d2d;"></div>
<div style="left:18px;top:268px;width:993px;height:1px;background:#e1e1e1;"></div>
<div style="left:18px;top:281px;width:993px;height:1px;background:#e1e1e1;"></div>
<div style="left:18px;top:293px;width:993px;height:1px;background:#e1e1e1;"></div>
<div style="left:18px;top:306px;width:993px;height:1px;background:#e1e1e1;"></div>
<div style="left:18px;top:319px;width:993px;height:1px;background:#e1e1e1;"></div>
<div style="left:18px;top:332px;width:993px;height:1px;background:#e1e1e1;"></div>
<div style="left:18px;top:345px;width:993px;height:1px;background:#e1e1e1;"></div>
<div style="left:18px;top:357px;width:993px;height:1px;background:#e1e1e1;"></div>
<div style="left:18px;top:370px;width:993px;height:1px;background:#e1e1e1;"></div>
<div style="left:18px;top:383px;width:993px;height:1px;background:#e1e1e1;"></div>
<div style="left:18px;top:396px;width:993px;height:1px;background:#e1e1e1;"></div>
<div style="left:18px;top:409px;width:993px;height:1px;background:#e1e1e1;"></div>
<div style="left:18px;top:421px;width:993px;height:1px;background:#e1e1e1;"></div>
<div style="left:18px;top:434px;width:993px;height:1px;background:#e1e1e1;"></div>
<div style="left:18px;top:447px;width:993px;height:1px;background:#e1e1e1;"></div>
<div style="left:18px;top:460px;width:993px;height:1px;background:#e1e1e1;"></div>
<div style="left:18px;top:473px;width:993px;height:1px;background:#e1e1e1;"></div>
<div style="left:18px;top:485px;width:993px;height:1px;background:#e1e1e1;"></div>
<div style="left:18px;top:498px;width:993px;height:1px;background:#e1e1e1;"></div>
<div style="left:18px;top:511px;width:993px;height:1px;background:#e1e1e1;"></div>
<div style="left:107px;top:256px;width:1px;height:256px;background:#e1e1e1;"></div>
<div style="left:181px;top:256px;width:1px;height:256px;background:#e1e1e1;"></div>
<div style="left:345px;top:256px;width:1px;height:256px;background:#e1e1e1;"></div>
<div style="left:509px;top:256px;width:1px;height:256px;background:#e1e1e1;"></div>
<div style="left:582px;top:256px;width:1px;height:256px;background:#e1e1e1;"></div>
<div style="left:627px;top:256px;width:1px;height:256px;background:#e1e1e1;"></div>
<div style="left:666px;top:256px;width:1px;height:256px;background:#e1e1e1;"></div>
<div style="left:728px;top:256px;width:1px;height:256px;background:#e1e1e1;"></div>
<div style="left:789px;top:256px;width:1px;height:256px;background:#e1e1e1;"></div>
<div style="left:936px;top:256px;width:1px;height:256px;background:#e1e1e1;"></div>
<div style="left:980px;top:256px;width:1px;height:256px;background:#e1e1e1;"></div>
<div style="left:1011px;top:256px;width:1px;height:256px;background:#e1e1e1;"></div>
<div style="left:1010px;top:146px;width:2px;height:366px;background:#cfcfcf;"></div>
<svg style="position:absolute;left:17px;top:146px;" width="108" height="32" viewBox="0 0 108 32"><g transform="translate(-17,-146)" fill="none" stroke="#141b2b" stroke-width="3.1"><path d="M22.150000000000002 162.05 H35.550000000000004"/><path d="M34.050000000000004 162.05 A5.95 5.95 0 1 0 32.79 165.71"/><circle cx="45.8" cy="162.05" r="6.1"/><path d="M51.85 154.4 V175"/><path d="M56.5 154.4 L62.35 168.6 L68.2 154.4" stroke-linejoin="round"/><path d="M74.2 154.4 V169.7"/><circle cx="74.2" cy="151" r="1.95" fill="#141b2b" stroke="none"/><path d="M89.2 157.8 C88.3 156.4 86.9 155.9 85 155.9 C82.6 155.9 80.9 157 80.9 158.8 C80.9 160.8 83 161.4 85 161.9 C87.2 162.4 89.2 163 89.2 165.3 C89.2 167.2 87.4 168.2 85 168.2 C82.9 168.2 81.3 167.4 80.5 165.8"/><path d="M96.6 151.8 V165 C96.6 167.5 97.8 168.2 100 168.2 H103"/><path d="M93 156 H102.3"/><circle cx="112.7" cy="162.05" r="5.9"/><path d="M119.45 154.4 V169.7"/></g></svg>
<div class="t" style="left:20.00px;top:204.00px;font-size:8.5px;line-height:8.5px;color:#7a7797;font-weight:bold;transform:scaleX(0.9770);">Company shareholders</div>
<div class="t" style="left:20.00px;top:246.00px;font-size:8.5px;line-height:8.5px;color:#fff;font-weight:bold;transform:scaleX(1.0151);">Name</div>
<div class="t" style="left:109.50px;top:246.00px;font-size:8.5px;line-height:8.5px;color:#fff;font-weight:bold;transform:scaleX(1.0152);">Type</div>
<div class="t" style="left:183.00px;top:246.00px;font-size:8.5px;line-height:8.5px;color:#fff;font-weight:bold;transform:scaleX(0.9701);">Email</div>
<div class="t" style="left:346.70px;top:246.00px;font-size:8.5px;line-height:8.5px;color:#fff;font-weight:bold;transform:scaleX(0.9810);">Secondary Email</div>
<div class="t" style="left:510.60px;top:246.00px;font-size:8.5px;line-height:8.5px;color:#fff;font-weight:bold;transform:scaleX(1.0107);">Phone Number</div>
<div class="t" style="left:584.50px;top:246.00px;font-size:8.5px;line-height:8.5px;color:#fff;font-weight:bold;transform:scaleX(0.9261);">Address</div>
<div class="t" style="left:628.50px;top:246.00px;font-size:8.5px;line-height:8.5px;color:#fff;font-weight:bold;transform:scaleX(1.0652);">Tax ID</div>
<div class="t" style="left:668.30px;top:246.00px;font-size:8.5px;line-height:8.5px;color:#fff;font-weight:bold;transform:scaleX(0.9857);">Created</div>
<div class="t" style="left:730.00px;top:246.00px;font-size:8.5px;line-height:8.5px;color:#fff;font-weight:bold;transform:scaleX(1.0180);">Terminated</div>
<div class="t" style="left:792.00px;top:246.00px;font-size:8.5px;line-height:8.5px;color:#fff;font-weight:bold;">Notes</div>
<div class="t" style="left:20.00px;top:259.00px;font-size:8.5px;line-height:8.5px;color:#222;transform:scaleX(1.0251);-webkit-text-stroke:0.15px #2a2a2a;">Alexa Will</div>
<div class="t" style="left:109.50px;top:259.00px;font-size:8.5px;line-height:8.5px;color:#222;transform:scaleX(1.0251);-webkit-text-stroke:0.15px #2a2a2a;">Shareholder</div>
<div class="t" style="left:668.30px;top:259.00px;font-size:8.5px;line-height:8.5px;color:#222;transform:scaleX(1.0502);-webkit-text-stroke:0.15px #2a2a2a;">02-11-2026</div>
<div class="t" style="left:20.00px;top:272.00px;font-size:8.5px;line-height:8.5px;color:#222;transform:scaleX(1.0251);-webkit-text-stroke:0.15px #2a2a2a;">Bella Micheal</div>
<div class="t" style="left:109.50px;top:272.00px;font-size:8.5px;line-height:8.5px;color:#222;transform:scaleX(1.0251);-webkit-text-stroke:0.15px #2a2a2a;">Employee</div>
<div class="t" style="left:668.30px;top:272.00px;font-size:8.5px;line-height:8.5px;color:#222;transform:scaleX(1.0502);-webkit-text-stroke:0.15px #2a2a2a;">02-11-2026</div>
<div class="t" style="left:20.00px;top:285.00px;font-size:8.5px;line-height:8.5px;color:#222;transform:scaleX(1.0251);-webkit-text-stroke:0.15px #2a2a2a;">Louis Richard</div>
<div class="t" style="left:109.50px;top:285.00px;font-size:8.5px;line-height:8.5px;color:#222;transform:scaleX(1.0251);-webkit-text-stroke:0.15px #2a2a2a;">Investor</div>
<div class="t" style="left:668.30px;top:285.00px;font-size:8.5px;line-height:8.5px;color:#222;transform:scaleX(1.0349);-webkit-text-stroke:0.15px #2a2a2a;">02-21-2025</div>
<div class="t" style="left:20.00px;top:297.00px;font-size:8.5px;line-height:8.5px;color:#222;transform:scaleX(1.0251);-webkit-text-stroke:0.15px #2a2a2a;">Rosa Francis</div>
<div class="t" style="left:109.50px;top:297.00px;font-size:8.5px;line-height:8.5px;color:#222;transform:scaleX(1.0251);-webkit-text-stroke:0.15px #2a2a2a;">Employee</div>
<div class="t" style="left:668.30px;top:297.00px;font-size:8.5px;line-height:8.5px;color:#222;transform:scaleX(1.0349);-webkit-text-stroke:0.15px #2a2a2a;">02-21-2025</div>
<div class="t" style="left:20.00px;top:310.00px;font-size:8.5px;line-height:8.5px;color:#222;transform:scaleX(1.0251);-webkit-text-stroke:0.15px #2a2a2a;">Annie John</div>
<div class="t" style="left:109.50px;top:310.00px;font-size:8.5px;line-height:8.5px;color:#222;transform:scaleX(1.0251);-webkit-text-stroke:0.15px #2a2a2a;">Investor</div>
<div class="t" style="left:668.30px;top:310.00px;font-size:8.5px;line-height:8.5px;color:#222;transform:scaleX(1.0349);-webkit-text-stroke:0.15px #2a2a2a;">02-19-2025</div>
<div class="t" style="left:20.00px;top:323.00px;font-size:8.5px;line-height:8.5px;color:#222;transform:scaleX(1.0251);-webkit-text-stroke:0.15px #2a2a2a;">Robert Lee</div>
<div class="t" style="left:109.50px;top:323.00px;font-size:8.5px;line-height:8.5px;color:#222;transform:scaleX(1.0251);-webkit-text-stroke:0.15px #2a2a2a;">Shareholder</div>
<div class="t" style="left:668.30px;top:323.00px;font-size:8.5px;line-height:8.5px;color:#222;transform:scaleX(1.0349);-webkit-text-stroke:0.15px #2a2a2a;">07-29-2024</div>
<div class="t" style="left:20.00px;top:336.00px;font-size:8.5px;line-height:8.5px;color:#222;transform:scaleX(1.0251);-webkit-text-stroke:0.15px #2a2a2a;">Steve Mark</div>
<div class="t" style="left:109.50px;top:336.00px;font-size:8.5px;line-height:8.5px;color:#222;transform:scaleX(1.0251);-webkit-text-stroke:0.15px #2a2a2a;">Investor</div>
<div class="t" style="left:668.30px;top:336.00px;font-size:8.5px;line-height:8.5px;color:#222;transform:scaleX(1.0349);-webkit-text-stroke:0.15px #2a2a2a;">07-29-2024</div>
<div class="t" style="left:20.00px;top:349.00px;font-size:8.5px;line-height:8.5px;color:#222;transform:scaleX(1.0251);-webkit-text-stroke:0.15px #2a2a2a;">Amy White</div>
<div class="t" style="left:109.50px;top:349.00px;font-size:8.5px;line-height:8.5px;color:#222;transform:scaleX(1.0251);-webkit-text-stroke:0.15px #2a2a2a;">Shareholder</div>
<div class="t" style="left:668.30px;top:349.00px;font-size:8.5px;line-height:8.5px;color:#222;transform:scaleX(1.0349);-webkit-text-stroke:0.15px #2a2a2a;">07-29-2024</div>
<div class="t" style="left:20.00px;top:361.00px;font-size:8.5px;line-height:8.5px;color:#222;transform:scaleX(1.0251);-webkit-text-stroke:0.15px #2a2a2a;">Clara John</div>
<div class="t" style="left:109.50px;top:361.00px;font-size:8.5px;line-height:8.5px;color:#222;transform:scaleX(1.0251);-webkit-text-stroke:0.15px #2a2a2a;">Board Member</div>
<div class="t" style="left:668.30px;top:361.00px;font-size:8.5px;line-height:8.5px;color:#222;transform:scaleX(1.0349);-webkit-text-stroke:0.15px #2a2a2a;">07-29-2024</div>
<div class="t" style="left:20.00px;top:374.00px;font-size:8.5px;line-height:8.5px;color:#222;transform:scaleX(1.0251);-webkit-text-stroke:0.15px #2a2a2a;">Jessica Stewart</div>
<div class="t" style="left:109.50px;top:374.00px;font-size:8.5px;line-height:8.5px;color:#222;transform:scaleX(1.0251);-webkit-text-stroke:0.15px #2a2a2a;">Founder</div>
<div class="t" style="left:668.30px;top:374.00px;font-size:8.5px;line-height:8.5px;color:#222;transform:scaleX(1.0349);-webkit-text-stroke:0.15px #2a2a2a;">07-29-2024</div>
<div class="t" style="left:20.00px;top:387.00px;font-size:8.5px;line-height:8.5px;color:#222;transform:scaleX(1.0251);-webkit-text-stroke:0.15px #2a2a2a;">Peter Anderson</div>
<div class="t" style="left:109.50px;top:387.00px;font-size:8.5px;line-height:8.5px;color:#222;transform:scaleX(1.0251);-webkit-text-stroke:0.15px #2a2a2a;">Founder</div>
<div class="t" style="left:183.00px;top:387.00px;font-size:8.5px;line-height:8.5px;color:#222;transform:scaleX(1.0339);-webkit-text-stroke:0.15px #2a2a2a;">peteranderson5812@gmail.com</div>
<div class="t" style="left:668.30px;top:387.00px;font-size:8.5px;line-height:8.5px;color:#222;transform:scaleX(1.0349);-webkit-text-stroke:0.15px #2a2a2a;">12-27-2023</div>
<div style="left:1012px;top:146px;width:12px;height:366px;background:#e9e9e9;"></div>
<div style="left:1011px;top:133px;width:13px;height:13px;background:#e6e6e6;"></div>
<div style="left:1013px;top:134px;width:10px;height:11px;background:#fff;border:1px solid #c6c6c6;box-sizing:border-box;"></div>
<svg style="position:absolute;left:1015.5px;top:138px;" width="5" height="3" viewBox="0 0 5 3"><path d="M0 3 H5 L2.5 0Z" fill="#333"/></svg>
<div style="left:1013px;top:145px;width:10px;height:337px;background:#fff;border:1px solid #c6c6c6;box-sizing:border-box;"></div>
<div style="left:1013px;top:502px;width:10px;height:11px;background:#fff;border:1px solid #c6c6c6;box-sizing:border-box;"></div>
<svg style="position:absolute;left:1015.5px;top:506px;" width="5" height="3" viewBox="0 0 5 3"><path d="M0 0 H5 L2.5 3Z" fill="#333"/></svg>
<div style="left:0px;top:512px;width:1024px;height:17px;background:#e6e6e6;"></div>
<div style="left:0px;top:512px;width:1011px;height:1px;background:#c6c6c6;"></div>
<svg style="position:absolute;left:16px;top:518.5px;" width="4" height="6" viewBox="0 0 4 6"><path d="M3.2 0 V6 L0 3Z" fill="#c4c4c4"/></svg>
<svg style="position:absolute;left:33px;top:518.5px;" width="4" height="6" viewBox="0 0 4 6"><path d="M0.3 0 V6 L3.5 3Z" fill="#c4c4c4"/></svg>
<div style="left:59px;top:516px;width:1px;height:12px;background:#bbb;"></div>
<div class="t" style="left:69.70px;top:516.00px;font-size:9px;line-height:9px;color:#555;transform:scaleX(1.0162);">Extended captable report</div>
<div style="left:182px;top:512px;width:69px;height:15px;background:#fff;border:2px solid #d3343c;box-sizing:border-box;"></div>
<div style="left:182px;top:527px;width:69px;height:1px;background:#3f8a5e;"></div>
<div class="t" style="left:188.50px;top:516.00px;font-size:9px;line-height:9px;color:#2b7a4e;font-weight:bold;transform:scaleX(0.9683);">Shareholders</div>
<div class="t" style="left:258.20px;top:516.00px;font-size:9px;line-height:9px;color:#555;transform:scaleX(1.0094);">Common Equities</div>
<div style="left:338px;top:515px;width:1px;height:12px;background:#c0c0c0;"></div>
<div class="t" style="left:347.50px;top:516.00px;font-size:9px;line-height:9px;color:#555;transform:scaleX(0.9884);">Preferred Equities</div>
<div style="left:428px;top:515px;width:1px;height:12px;background:#c0c0c0;"></div>
<div class="t" style="left:434.90px;top:516.00px;font-size:9px;line-height:9px;color:#555;transform:scaleX(1.0252);">Options</div>
<div style="left:474px;top:515px;width:1px;height:12px;background:#c0c0c0;"></div>
<div class="t" style="left:481.70px;top:516.00px;font-size:9px;line-height:9px;color:#555;transform:scaleX(1.0174);">Warrants</div>
<div style="left:526px;top:515px;width:1px;height:12px;background:#c0c0c0;"></div>
<div class="t" style="left:533.80px;top:516.00px;font-size:9px;line-height:9px;color:#555;">Convertibles</div>
<div style="left:592px;top:515px;width:1px;height:12px;background:#c0c0c0;"></div>
<svg style="position:absolute;left:612px;top:515.5px;" width="12" height="12" viewBox="0 0 12 12"><circle cx="6" cy="6" r="5" fill="none" stroke="#666" stroke-width="0.9"/><path d="M6 3 V9 M3 6 H9" stroke="#666" stroke-width="0.9"/></svg>
<div style="left:637px;top:518px;width:2px;height:1.5px;background:#b5b5b5;"></div>
<div style="left:637px;top:520.5px;width:2px;height:1.5px;background:#b5b5b5;"></div>
<div style="left:637px;top:523px;width:2px;height:1.5px;background:#b5b5b5;"></div>
<div style="left:648px;top:516px;width:362px;height:11px;background:#f0f0f0;"></div>
<div style="left:648px;top:516px;width:10px;height:11px;background:#fff;border:1px solid #c6c6c6;box-sizing:border-box;"></div>
<svg style="position:absolute;left:651px;top:519px;" width="3" height="5" viewBox="0 0 3 5"><path d="M3 0 V5 L0 2.5Z" fill="#333"/></svg>
<div style="left:657px;top:516px;width:233px;height:11px;background:#fff;border:1px solid #c6c6c6;box-sizing:border-box;"></div>
<div style="left:1000px;top:516px;width:10px;height:11px;background:#fff;border:1px solid #c6c6c6;box-sizing:border-box;"></div>
<svg style="position:absolute;left:1004px;top:519px;" width="3" height="5" viewBox="0 0 3 5"><path d="M0 0 V5 L3 2.5Z" fill="#333"/></svg>
<div style="left:0px;top:529px;width:1024px;height:15px;background:#f3f3f3;"></div>
<div class="t" style="left:7.80px;top:534.00px;font-size:7px;line-height:7px;color:#444;transform:scaleX(0.9489);">Ready</div>
<div class="t" style="left:38.00px;top:534.00px;font-size:7px;line-height:7px;color:#444;transform:scaleX(0.9252);">Calculate</div>
<svg style="position:absolute;left:80px;top:533px;" width="8" height="8" viewBox="0 0 8 8"><rect x="0.5" y="0.5" width="7" height="7" fill="none" stroke="#888" stroke-width="0.9"/><rect x="0" y="2" width="8" height="2" fill="#555"/><rect x="1" y="0" width="2" height="1.5" fill="#555"/><rect x="4" y="0" width="3" height="1.5" fill="#555"/></svg>
<svg style="position:absolute;left:100px;top:532px;" width="11" height="10" viewBox="0 0 11 10"><path d="M5 1 A4 4 0 1 0 8 7" fill="none" stroke="#555" stroke-width="0.9" stroke-dasharray="1.5 1"/><path d="M6 5 L10 9 M10 5 L6 9" stroke="#333" stroke-width="1.1"/></svg>
<div class="t" style="left:112.90px;top:534.00px;font-size:7px;line-height:7px;color:#333;font-weight:bold;transform:scaleX(0.9624);">Accessibility: Investigate</div>
<div style="left:826px;top:529px;width:26px;height:15px;background:#d6d6d6;"></div>
<svg style="position:absolute;left:834px;top:532px;" width="10" height="9" viewBox="0 0 10 9"><path d="M0.5 0.5 H9.5 V8.5 H0.5Z M3.5 0.5 V8.5 M6.5 0.5 V8.5 M0.5 3.2 H9.5 M0.5 5.9 H9.5" fill="none" stroke="#666" stroke-width="0.8"/></svg>
<svg style="position:absolute;left:860px;top:532px;" width="10" height="9" viewBox="0 0 10 9"><rect x="0.5" y="0.5" width="9" height="8" fill="none" stroke="#777"/><rect x="2.5" y="2" width="5" height="5" fill="none" stroke="#777"/></svg>
<svg style="position:absolute;left:887px;top:532px;" width="10" height="9" viewBox="0 0 10 9"><rect x="0.5" y="0.5" width="9" height="8" fill="none" stroke="#777"/><path d="M5 0.5 V4.5 H0.5" fill="none" stroke="#777"/></svg>
<div style="left:909px;top:536px;width:5px;height:1px;background:#666;"></div>
<div style="left:918px;top:536px;width:67px;height:1px;background:#999;"></div>
<div style="left:950px;top:533px;width:3px;height:8px;background:#444;"></div>
<svg style="position:absolute;left:987px;top:533px;" width="7" height="7" viewBox="0 0 7 7"><path d="M3.5 0 V7 M0 3.5 H7" stroke="#555"/></svg>
<div class="t" style="left:1001.70px;top:534.00px;font-size:7px;line-height:7px;color:#444;transform:scaleX(0.9328);">100%</div>
</body></html>
